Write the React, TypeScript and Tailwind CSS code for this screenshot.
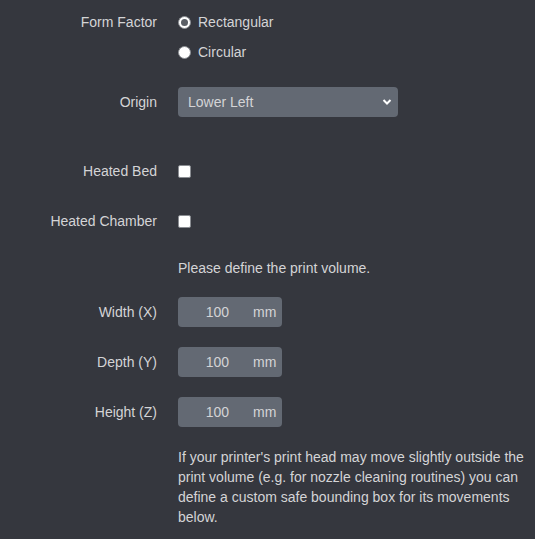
import { useState } from 'react';

const Row = ({ label, className = '', children }: any) => (
    <div className={`grid grid-cols-[157px_1fr] gap-x-[21px] ${className}`}>
        <div className="text-right flex items-center justify-end h-[30px]">{label}</div>
        <div>{children}</div>
    </div>
);

const Radio = ({ checked, label, onClick }: any) => (
    <div className="flex items-center h-[30px] cursor-pointer" onClick={onClick}>
        <span className="w-[13px] h-[13px] rounded-full bg-white flex items-center justify-center border border-[#8a8d92]">
            {checked && <span className="w-[7px] h-[7px] rounded-full bg-[#5b5f66]" />}
        </span>
        <span className="ml-[7px]">{label}</span>
    </div>
);

const Check = () => (
    <div className="flex items-center h-[30px]">
        <span className="w-[13px] h-[13px] rounded-[2px] bg-white border border-[#8a8d92]" />
    </div>
);

const SizeInput = ({ value }: any) => (
    <div className="flex w-[104px] h-[30px] rounded-[4px] bg-[#636973] overflow-hidden">
        <div className="w-[64px] flex items-center justify-end pr-[13px]">{value}</div>
        <div className="flex-1 flex items-center pl-[11px]">mm</div>
    </div>
);

const App = () => {
    const [formFactor, setFormFactor] = useState('rect');

    return (
        <div
            className="w-[535px] h-[539px] overflow-hidden bg-[#35373e] text-[#d4d4d6] text-[14px] leading-[20px] pt-[7px]"
            style={{ fontFamily: '"Liberation Sans", Arial, sans-serif' }}
        >
            <Row label="Form Factor">
                <Radio checked={formFactor === 'rect'} label="Rectangular" onClick={() => setFormFactor('rect')} />
                <Radio checked={formFactor === 'circ'} label="Circular" onClick={() => setFormFactor('circ')} />
            </Row>

            <Row label="Origin" className="mt-[20px]">
                <div className="relative w-[220px] h-[30px] rounded-[4px] bg-[#636973]">
                    <div className="h-full flex items-center pl-[10px]">Lower Left</div>
                    <svg className="absolute right-[6px] top-[11px]" width="10" height="8" viewBox="0 0 10 8">
                        <path d="M1.5 2 L5 5.5 L8.5 2" fill="none" stroke="#ffffff" strokeWidth="2" />
                    </svg>
                </div>
            </Row>

            <Row label="Heated Bed" className="mt-[39px]">
                <Check />
            </Row>

            <Row label="Heated Chamber" className="mt-[20px]">
                <Check />
            </Row>

            <div className="ml-[178px] mt-[22px]">Please define the print volume.</div>

            <Row label="Width (X)" className="mt-[19px]">
                <SizeInput value="100" />
            </Row>
            <Row label="Depth (Y)" className="mt-[20px]">
                <SizeInput value="100" />
            </Row>
            <Row label="Height (Z)" className="mt-[20px]">
                <SizeInput value="100" />
            </Row>

            <p className="ml-[178px] mt-[20px] w-[352px]">
                If your printer's print head may move slightly outside the print volume (e.g. for nozzle cleaning routines) you can define a custom safe bounding box for its movements below.
            </p>
        </div>
    );
};

export default App;
